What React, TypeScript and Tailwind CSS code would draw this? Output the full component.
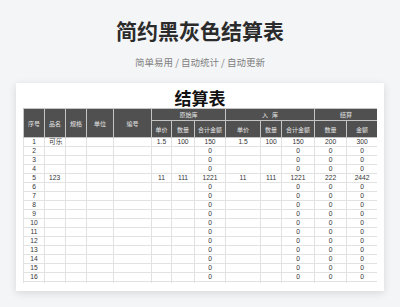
import React from "react";

const widths = [21, 21, 21, 27, 38, 20, 23, 31, 35, 21, 33, 32, 31];

type Row = (string | number)[];

function makeRows(): Row[] {
  const rows: Row[] = [];
  for (let i = 1; i <= 17; i++) {
    if (i === 1) rows.push([1, "可乐", "", "", "", "1.5", 100, 150, "1.5", 100, 150, 200, 300]);
    else if (i === 5) rows.push([5, "123", "", "", "", 11, 111, 1221, 11, 111, 1221, 222, 2442]);
    else rows.push([i, "", "", "", "", "", "", 0, "", "", 0, 0, 0]);
  }
  return rows;
}

const th =
  "bg-[#505050] text-[#e6e6e6] border border-[#c4c4c4] font-normal text-[6px] p-0 text-center align-middle whitespace-nowrap";

export default function App() {
  const rows = makeRows();
  return (
    <div
      className="w-[400px] h-[307px] bg-[#f4f5f7] overflow-hidden flex flex-col items-center pt-[16px]"
      style={{ fontFamily: '"Liberation Sans", "Noto Sans CJK SC", sans-serif' }}
    >
      <div
        className="h-[28px] leading-[28px] text-[21px] font-bold text-[#2b2b2b]"
        style={{ fontFamily: '"Noto Sans CJK SC", sans-serif' }}
      >
        简约黑灰色结算表
      </div>
      <div
        className="mt-[11px] h-[14px] leading-[14px] text-[9.5px] text-[#808080] whitespace-pre"
        style={{ fontFamily: '"Noto Sans CJK SC", sans-serif' }}
      >
        {"简单易用 / 自动统计 / 自动更新"}
      </div>
      <div className="mt-[14px] w-[368px] h-[208px] bg-white shadow-[0_2px_8px_rgba(0,0,0,0.12)] px-[7px] pt-[5px] pb-[8px] flex flex-col">
        <div
          className="h-[20px] leading-[20px] text-center text-[17px] font-bold text-[#111]"
          style={{ fontFamily: '"Noto Sans CJK SC", sans-serif' }}
        >
          结算表
        </div>
        <div className="h-[175px] overflow-hidden">
          <table className="table-fixed border-collapse w-[354px]">
            <colgroup>
              {widths.map((w, i) => (
                <col key={i} style={{ width: w }} />
              ))}
            </colgroup>
            <thead style={{ fontFamily: '"Noto Sans CJK SC", sans-serif' }}>
              <tr className="h-[12px]">
                <th rowSpan={2} className={th}>序号</th>
                <th rowSpan={2} className={th}>品名</th>
                <th rowSpan={2} className={th}>规格</th>
                <th rowSpan={2} className={th}>单位</th>
                <th rowSpan={2} className={th}>编号</th>
                <th colSpan={3} className={th}>原始库</th>
                <th colSpan={3} className={th}>{"入\u00a0\u00a0\u00a0库"}</th>
                <th colSpan={2} className={th}>结算</th>
              </tr>
              <tr className="h-[17px]">
                <th className={th}>单价</th>
                <th className={th}>数量</th>
                <th className={th}>合计金额</th>
                <th className={th}>单价</th>
                <th className={th}>数量</th>
                <th className={th}>合计金额</th>
                <th className={th}>数量</th>
                <th className={th}>金额</th>
              </tr>
            </thead>
            <tbody>
              {rows.map((r, ri) => (
                <tr key={ri} className="h-[9px]">
                  {r.map((c, ci) => (
                    <td
                      key={ci}
                      className={
                        "border border-[#e2e2e2] p-0 h-[9px] leading-[8px] text-[6.7px] text-[#333] whitespace-nowrap overflow-hidden " +
                        (ci === 1 ? "text-left pl-[4px]" : "text-center")
                      }
                    >
                      {c}
                    </td>
                  ))}
                </tr>
              ))}
            </tbody>
          </table>
        </div>
      </div>
    </div>
  );
}
